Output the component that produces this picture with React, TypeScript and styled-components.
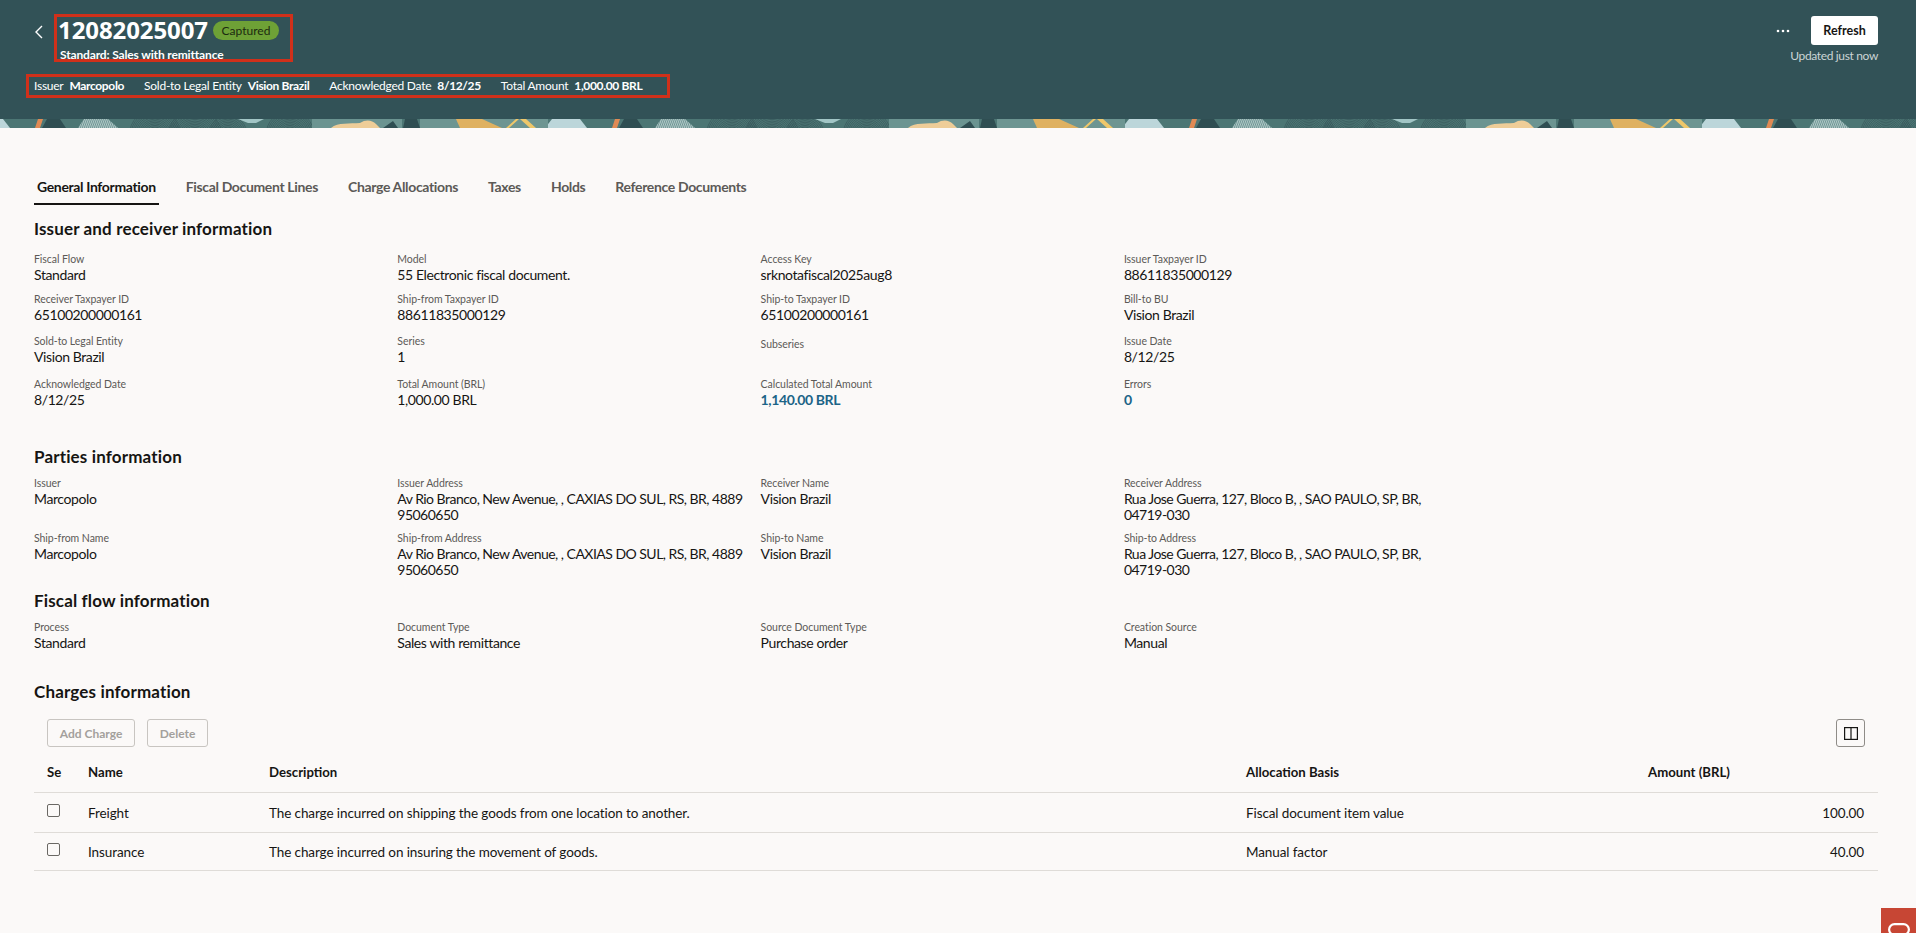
import React from 'react';
import styled, { createGlobalStyle } from 'styled-components';

const GlobalStyle = createGlobalStyle`
  html, body {
    margin: 0;
    padding: 0;
    background: #fbf9f8;
    color: #161513;
    font-family: Lato, "Noto Sans", sans-serif;
  }
  * { box-sizing: border-box; }
`;

const Page = styled.div`
  position: relative;
  width: 100%;
  height: 933px;
  overflow: hidden;
  background: #fbf9f8;
`;

const Header = styled.header`
  height: 119px;
  background: #325257;
  color: #fff;
  padding: 14px 38px 0 26px;
`;

const HeaderTop = styled.div`
  display: flex;
  align-items: flex-start;
`;

const BackButton = styled.div`
  width: 28px;
  height: 32px;
  padding: 9px 0 0 8px;
`;

const TitleBox = styled.div`
  width: 239px;
  height: 48px;
  border: 3px solid #d0301a;
  padding: 0 0 0 3px;
`;

const TitleRow = styled.div`
  display: flex;
  align-items: center;
  height: 27px;
`;

const Title = styled.h1`
  margin: 0 0 2px -2px;
  width: 149px;
  font-family: "Noto Sans", sans-serif;
  font-size: 24px;
  line-height: 25px;
  font-weight: 700;
  letter-spacing: -0.1px;
  white-space: nowrap;
`;

const Badge = styled.span`
  margin-left: 6px;
  height: 19px;
  width: 66px;
  border-radius: 10px;
  background: #6ea136;
  color: #1c2a10;
  font-size: 12px;
  line-height: 19px;
  text-align: center;
`;

const Subtitle = styled.div`
  margin-top: 4px;
  font-size: 12px;
  line-height: 14px;
  font-weight: 700;
  letter-spacing: -0.15px;
`;

const HeaderActions = styled.div`
  margin-left: auto;
  margin-top: 2px;
  display: flex;
  flex-direction: column;
  align-items: flex-end;
`;

const ActionRow = styled.div`
  display: flex;
  align-items: center;
  gap: 21px;
`;

const RefreshButton = styled.button`
  width: 67px;
  height: 29px;
  border: 0;
  border-radius: 3px;
  background: #fff;
  color: #161513;
  font-family: inherit;
  font-size: 12.5px;
  font-weight: 700;
  padding: 0 0 1px;
`;

const Updated = styled.div`
  margin-top: 4px;
  font-size: 12px;
  line-height: 14px;
  letter-spacing: -0.35px;
  color: #ccd5d5;
`;

const MetaBox = styled.div`
  display: flex;
  align-items: center;
  width: 644px;
  height: 24px;
  margin-top: 11px;
  border: 3px solid #d0301a;
  padding: 0 0 2px 5px;
  font-size: 12px;
  letter-spacing: -0.25px;
  gap: 20px;
`;

const MetaItem = styled.span`
  display: flex;
  gap: 6px;
  white-space: nowrap;
`;

const MetaValue = styled.b`
  font-weight: 700;
  letter-spacing: -0.35px;
`;

const Strip = styled.svg`
  display: block;
  width: 100%;
  height: 9px;
`;

const Content = styled.main`
  padding: 0 38px 0 34px;
`;

const Tabs = styled.nav`
  display: flex;
  gap: 24px;
  padding-top: 45px;
  height: 77px;
`;

const Tab = styled.div<{ $active?: boolean }>`
  height: 32px;
  padding: 4px 3px 0;
  font-size: 14px;
  line-height: 20px;
  font-weight: 700;
  letter-spacing: -0.35px;
  color: ${({ $active }) => ($active ? '#161513' : '#5c5a57')};
  border-bottom: 2px solid ${({ $active }) => ($active ? '#161513' : 'transparent')};
  white-space: nowrap;
`;

const SectionTitle = styled.h2<{ $top?: number }>`
  margin: ${({ $top }) => $top ?? 0}px 0 0;
  font-size: 17px;
  line-height: 20px;
  font-weight: 700;
  letter-spacing: 0.15px;
`;

const FieldGrid = styled.div<{ $rows: string; $top: number }>`
  display: grid;
  grid-template-columns: repeat(4, 363.3px);
  grid-template-rows: ${({ $rows }) => $rows};
  margin-top: ${({ $top }) => $top}px;
`;

const Field = styled.div<{ $empty?: boolean }>`
  padding-top: ${({ $empty }) => ($empty ? 3 : 0)}px;
`;

const Label = styled.div`
  font-size: 10.5px;
  line-height: 13px;
  letter-spacing: -0.05px;
  color: #5c5a57;
`;

const Value = styled.div<{ $link?: boolean; $tight?: boolean }>`
  margin-top: 1px;
  font-size: 14px;
  line-height: 16px;
  letter-spacing: ${({ $tight }) => ($tight ? -0.52 : -0.4)}px;
  white-space: nowrap;
  color: ${({ $link }) => ($link ? '#1b6487' : '#161513')};
  font-weight: ${({ $link }) => ($link ? 700 : 400)};
`;

const Toolbar = styled.div`
  display: flex;
  align-items: center;
  gap: 12px;
  margin-top: 17px;
  padding: 0 13px;
`;

const GhostButton = styled.button<{ $w: number }>`
  width: ${({ $w }) => $w}px;
  height: 28px;
  padding: 0;
  border: 1px solid #c8c5c1;
  border-radius: 3px;
  background: transparent;
  color: #a3a09c;
  font-family: inherit;
  font-size: 12px;
  font-weight: 700;
`;

const ColumnsButton = styled.button`
  margin-left: auto;
  width: 29px;
  height: 28px;
  padding: 0;
  display: flex;
  align-items: center;
  justify-content: center;
  border: 1px solid #8f8c88;
  border-radius: 3px;
  background: transparent;
`;

const Table = styled.table`
  width: 100%;
  border-collapse: collapse;
  table-layout: fixed;
`;

const Th = styled.th<{ $w: number }>`
  width: ${({ $w }) => $w}px;
  height: 45px;
  padding: 5px 14px 0 13px;
  border-bottom: 1px solid #dfdcd8;
  text-align: left;
  font-size: 13.2px;
  font-weight: 700;
  white-space: nowrap;
  overflow: hidden;
`;

const Row = styled.tr<{ $h: number }>`
  height: ${({ $h }) => $h}px;
`;

const Td = styled.td<{ $right?: boolean }>`
  padding: 1px 14px 0 13px;
  border-bottom: 1px solid #dfdcd8;
  font-size: 13.5px;
  letter-spacing: -0.1px;
  text-align: ${({ $right }) => ($right ? 'right' : 'left')};
`;

const CheckBox = styled.span`
  display: block;
  width: 13px;
  height: 13px;
  margin-bottom: 5px;
  border: 1px solid #6a6864;
  border-radius: 2px;
`;

const OracleMark = styled.div`
  position: absolute;
  right: 0;
  bottom: 0;
  width: 35px;
  height: 25px;
  background: #c74634;
  padding: 12px 0 0 7px;
`;

const issuerFields: [string, string, boolean?][] = [
  ['Fiscal Flow', 'Standard'],
  ['Model', '55 Electronic fiscal document.'],
  ['Access Key', 'srknotafiscal2025aug8'],
  ['Issuer Taxpayer ID', '88611835000129'],
  ['Receiver Taxpayer ID', '65100200000161'],
  ['Ship-from Taxpayer ID', '88611835000129'],
  ['Ship-to Taxpayer ID', '65100200000161'],
  ['Bill-to BU', 'Vision Brazil'],
  ['Sold-to Legal Entity', 'Vision Brazil'],
  ['Series', '1'],
  ['Subseries', ''],
  ['Issue Date', '8/12/25'],
  ['Acknowledged Date', '8/12/25'],
  ['Total Amount (BRL)', '1,000.00 BRL'],
  ['Calculated Total Amount', '1,140.00 BRL', true],
  ['Errors', '0', true],
];

const issuerAddress = (
  <>
    Av Rio Branco, New Avenue, , CAXIAS DO SUL, RS, BR, 4889
    <br />
    95060650
  </>
);

const receiverAddress = (
  <>
    Rua Jose Guerra, 127, Bloco B, , SAO PAULO, SP, BR,
    <br />
    04719-030
  </>
);

const partyFields: [string, React.ReactNode][] = [
  ['Issuer', 'Marcopolo'],
  ['Issuer Address', issuerAddress],
  ['Receiver Name', 'Vision Brazil'],
  ['Receiver Address', receiverAddress],
  ['Ship-from Name', 'Marcopolo'],
  ['Ship-from Address', issuerAddress],
  ['Ship-to Name', 'Vision Brazil'],
  ['Ship-to Address', receiverAddress],
];

const flowFields: [string, string][] = [
  ['Process', 'Standard'],
  ['Document Type', 'Sales with remittance'],
  ['Source Document Type', 'Purchase order'],
  ['Creation Source', 'Manual'],
];

const tabs = [
  'General Information',
  'Fiscal Document Lines',
  'Charge Allocations',
  'Taxes',
  'Holds',
  'Reference Documents',
];

const charges = [
  { name: 'Freight', description: 'The charge incurred on shipping the goods from one location to another.', basis: 'Fiscal document item value', amount: '100.00', height: 40 },
  { name: 'Insurance', description: 'The charge incurred on insuring the movement of goods.', basis: 'Manual factor', amount: '40.00', height: 38 },
];

// concentric "fingerprint" rings used by the banner artwork
const Rings = ({ cx, cy, max }: { cx: number; cy: number; max: number }) => (
  <g fill="none" stroke="#2f4e52" strokeWidth="0.7" opacity="0.8">
    {Array.from({ length: Math.floor(max / 1.6) }, (_, i) => (
      <circle key={i} cx={cx} cy={cy} r={(i + 1) * 1.6} />
    ))}
  </g>
);

const Banner = () => (
  <Strip aria-hidden="true">
    <defs>
      <pattern id="hatch" width="2" height="9" patternUnits="userSpaceOnUse" patternTransform="skewX(-20)">
        <rect width="1" height="9" fill="#cfdedd" opacity="0.7" />
      </pattern>
      <pattern id="banner" width="577" height="9" patternUnits="userSpaceOnUse">
        <rect width="577" height="9" fill="#4c7674" />
        <polygon points="0,0 3,0 10,9 0,9" fill="#bcd6da" />
        <polygon points="552,0 580,0 587,9 545,9" fill="#bcd6da" />
        <polygon points="38,0 43,0 40,9 35,9" fill="#e08a54" />
        <polygon points="47,0 60,0 66,9 42,9" fill="#2f4e52" />
        <polygon points="84,0 108,0 118,9 78,9" fill="#6f9795" />
        <polygon points="84,0 108,0 118,9 78,9" fill="url(#hatch)" />
        <Rings cx={155} cy={16} max={26} />
        <Rings cx={195} cy={18} max={28} />
        <Rings cx={228} cy={16} max={20} />
        <polygon points="238,0 264,0 256,4 248,4" fill="#a2c6c6" />
        <Rings cx={290} cy={16} max={24} />
        <rect x="312" width="90" height="9" fill="#6b9491" />
        <path d="M331,9 C338,3 350,5 360,4 C366,0 372,1 376,5 L380,9 Z" fill="#eecd98" />
        <polygon points="383,9 393,2 398,9" fill="#2f4e52" />
        <polygon points="405,0 417,0 420,9 403,9" fill="#2f4e52" />
        <rect x="420" width="128" height="9" fill="#6d9592" />
        <polygon points="456,0 482,0 502,9 460,9" fill="#dfb161" />
        <polygon points="516,0 519,0 509,9 506,9" fill="#efc76a" />
        <polygon points="520,0 526,0 536,9 530,9" fill="#efc76a" />
      </pattern>
    </defs>
    <rect width="100%" height="9" fill="url(#banner)" />
  </Strip>
);

export default function App() {
  return (
    <Page>
      <GlobalStyle />
      <Header>
        <HeaderTop>
          <BackButton>
            <svg width="10" height="14" viewBox="0 0 10 14" fill="none" stroke="#fff" strokeWidth="1.4">
              <polyline points="8,1 2,7 8,13" />
            </svg>
          </BackButton>
          <TitleBox>
            <TitleRow>
              <Title>12082025007</Title>
              <Badge>Captured</Badge>
            </TitleRow>
            <Subtitle>Standard: Sales with remittance</Subtitle>
          </TitleBox>
          <HeaderActions>
            <ActionRow>
              <svg width="14" height="4" viewBox="0 0 14 4" fill="#fff">
                <circle cx="2" cy="2" r="1.3" />
                <circle cx="7" cy="2" r="1.3" />
                <circle cx="12" cy="2" r="1.3" />
              </svg>
              <RefreshButton>Refresh</RefreshButton>
            </ActionRow>
            <Updated>Updated just now</Updated>
          </HeaderActions>
        </HeaderTop>
        <MetaBox>
          <MetaItem>Issuer <MetaValue>Marcopolo</MetaValue></MetaItem>
          <MetaItem>Sold-to Legal Entity <MetaValue>Vision Brazil</MetaValue></MetaItem>
          <MetaItem>Acknowledged Date <MetaValue>8/12/25</MetaValue></MetaItem>
          <MetaItem>Total Amount <MetaValue>1,000.00 BRL</MetaValue></MetaItem>
        </MetaBox>
      </Header>
      <Banner />
      <Content>
        <Tabs>
          {tabs.map((tab, i) => (
            <Tab key={tab} $active={i === 0}>{tab}</Tab>
          ))}
        </Tabs>

        <SectionTitle $top={14}>Issuer and receiver information</SectionTitle>
        <FieldGrid $rows="40px 42px 43px 69px" $top={14}>
          {issuerFields.map(([label, value, link]) => (
            <Field key={label} $empty={label === 'Subseries'}>
              <Label>{label}</Label>
              <Value $link={link}>{value}</Value>
            </Field>
          ))}
        </FieldGrid>

        <SectionTitle>Parties information</SectionTitle>
        <FieldGrid $rows="55px 59px" $top={10}>
          {partyFields.map(([label, value]) => (
            <Field key={label}>
              <Label>{label}</Label>
              <Value $tight={label.includes('Address')}>{value}</Value>
            </Field>
          ))}
        </FieldGrid>

        <SectionTitle>Fiscal flow information</SectionTitle>
        <FieldGrid $rows="61px" $top={10}>
          {flowFields.map(([label, value]) => (
            <Field key={label}>
              <Label>{label}</Label>
              <Value>{value}</Value>
            </Field>
          ))}
        </FieldGrid>

        <SectionTitle>Charges information</SectionTitle>
        <Toolbar>
          <GhostButton $w={88}>Add Charge</GhostButton>
          <GhostButton $w={61}>Delete</GhostButton>
          <ColumnsButton aria-label="Columns">
            <svg width="14" height="13" viewBox="0 0 14 13" fill="none" stroke="#161513" strokeWidth="1.2">
              <rect x="0.6" y="0.6" width="12.8" height="11.8" />
              <line x1="7" y1="0.6" x2="7" y2="12.4" />
            </svg>
          </ColumnsButton>
        </Toolbar>
        <Table>
          <thead>
            <tr>
              <Th $w={41}>Se</Th>
              <Th $w={181}>Name</Th>
              <Th $w={977}>Description</Th>
              <Th $w={402}>Allocation Basis</Th>
              <Th $w={243}>Amount (BRL)</Th>
            </tr>
          </thead>
          <tbody>
            {charges.map((charge) => (
              <Row key={charge.name} $h={charge.height}>
                <Td><CheckBox /></Td>
                <Td>{charge.name}</Td>
                <Td>{charge.description}</Td>
                <Td>{charge.basis}</Td>
                <Td $right>{charge.amount}</Td>
              </Row>
            ))}
          </tbody>
        </Table>
      </Content>
      <OracleMark>
        <svg width="22" height="13" viewBox="0 0 22 13" fill="none" stroke="#fff" strokeWidth="2.2">
          <rect x="1.1" y="1.1" width="19.8" height="10.8" rx="5.4" />
        </svg>
      </OracleMark>
    </Page>
  );
}
